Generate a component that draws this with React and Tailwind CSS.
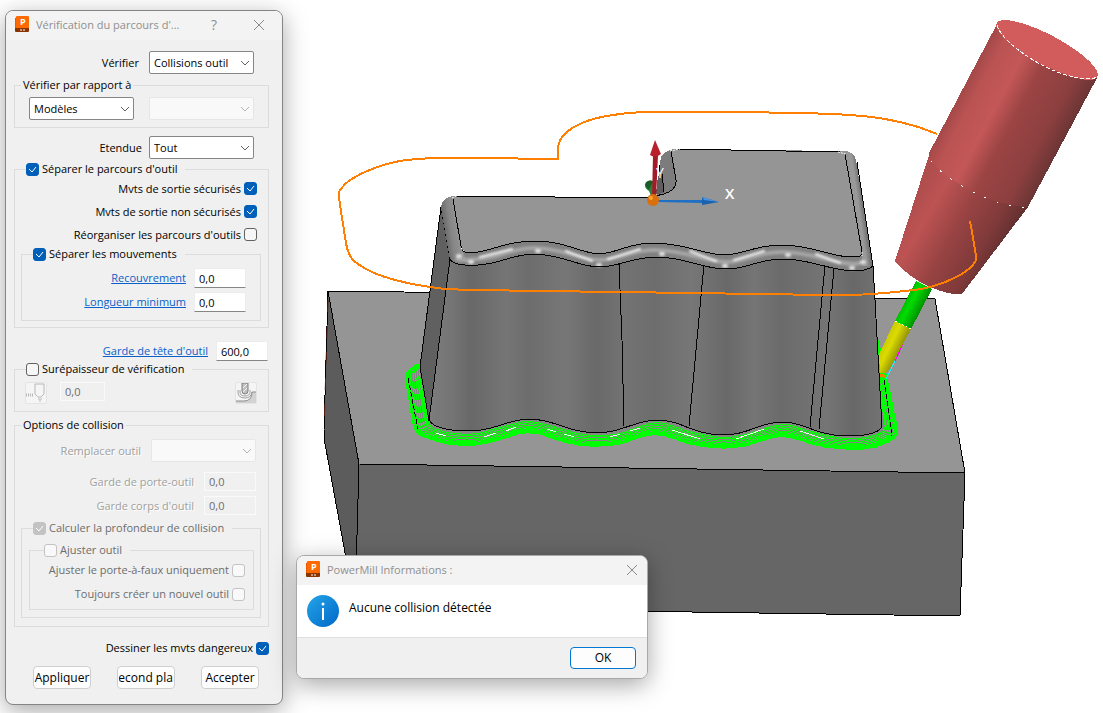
import React from "react";
import clsx from "clsx";

// The tool path follows the foot of the part; every pass is a blend of these two outlines.
const INNER = [
  [421, 364], [421, 374], [425, 400], [429, 421], [438, 428], [455, 432], [476, 432],
  [502, 425], [529, 420], [557, 426], [578, 432], [597, 434], [620, 432], [657, 421],
  [690, 430], [722, 436], [745, 433], [783, 423], [815, 431], [845, 437], [865, 436],
  [883, 428], [882, 400], [879, 375], [877, 335],
];
const OUTER = [
  [417, 364], [406, 375], [409, 400], [415, 430], [427, 438], [448, 444], [476, 445],
  [502, 439], [530, 432], [557, 440], [578, 445], [597, 446], [620, 444], [655, 434],
  [690, 444], [722, 448], [745, 446], [783, 436], [815, 445], [845, 449], [870, 448],
  [896, 436], [893, 408], [887, 378], [878, 340],
];
const PASSES = [0.12, 0.24, 0.37, 0.5, 0.62, 0.72, 0.81, 0.89, 0.96, 1];

function smoothPath(points) {
  return points.reduce((d, p, i) => {
    if (i === 0) {
      return `M${p[0]} ${p[1]}`;
    }
    const a = points[i - 1];
    const before = points[i - 2] || a;
    const after = points[i + 1] || p;
    const c1 = [a[0] + (p[0] - before[0]) / 6, a[1] + (p[1] - before[1]) / 6];
    const c2 = [p[0] - (after[0] - a[0]) / 6, p[1] - (after[1] - a[1]) / 6];
    return `${d}C${c1.join(" ")} ${c2.join(" ")} ${p.join(" ")}`;
  }, "");
}

function blend(t) {
  return INNER.map(([x, y], i) => [
    x + (OUTER[i][0] - x) * t,
    y + (OUTER[i][1] - y) * t,
  ]);
}

const TOP_EDGE =
  "C462 251 464 253 471 253C490 252 505 241 535 241C565 241 580 253 599 254C618 253 628 243 653 243C685 243 705 255 725 255C745 254 755 245 782 245C812 245 830 257 852 257C858 257 862 257 862 252";
const LOWER_EDGE =
  "M450 259C452 264 460 266 478 265C500 264 510 255 533 254C562 254 578 267 600 267C622 266 632 257 657 257C685 257 702 269 726 269C748 269 758 259 783 259C812 259 830 271 855 271C862 271 870 269 873 266";

const ORANGE_LOOP = smoothPath([
  [937, 134], [915, 126], [885, 119], [850, 115], [800, 113], [727, 112], [650, 112],
  [620, 114], [590, 120], [568, 131], [559, 143], [558, 159],
]);
const ORANGE_LOOP_LEFT = smoothPath([
  [559, 159], [470, 158], [435, 158], [400, 161], [372, 169], [350, 180], [341, 189],
  [339, 196], [343, 224], [348, 251], [358, 264], [385, 277], [430, 287], [475, 290],
  [620, 292], [760, 294], [850, 295], [895, 292], [930, 287], [960, 275], [975, 262],
  [975, 250], [970, 221],
]);

const GLINTS =
  "M480 257L512 249M566 251L592 261M608 259L640 249M690 251L716 261M734 260L764 251M816 254L840 263";
const SPOTS = [
  [459, 256], [471, 262], [538, 251], [599, 265], [662, 254], [725, 266], [788, 255],
  [852, 268], [863, 262],
];

function Scene() {
  return (
    <svg
      className="block w-full h-auto"
      viewBox="0 0 1103 713"
      role="img"
      aria-label="Vue 3D de la pièce et de l'outil"
    >
      <defs>
        <linearGradient id="wall" gradientUnits="userSpaceOnUse" x1="430" y1="0" x2="880" y2="0">
          <stop offset="0" stopColor="#7c7c7c" />
          <stop offset="0.05" stopColor="#747474" />
          <stop offset="0.09" stopColor="#686868" />
          <stop offset="0.17" stopColor="#757575" />
          <stop offset="0.22" stopColor="#6d6d6d" />
          <stop offset="0.3" stopColor="#777777" />
          <stop offset="0.37" stopColor="#696969" />
          <stop offset="0.43" stopColor="#737373" />
          <stop offset="0.5" stopColor="#6d6d6d" />
          <stop offset="0.58" stopColor="#777777" />
          <stop offset="0.66" stopColor="#696969" />
          <stop offset="0.72" stopColor="#757575" />
          <stop offset="0.78" stopColor="#6b6b6b" />
          <stop offset="0.88" stopColor="#757575" />
          <stop offset="0.94" stopColor="#686868" />
          <stop offset="1" stopColor="#727272" />
        </linearGradient>
        <linearGradient id="holder" gradientUnits="userSpaceOnUse" x1="963" y1="90" x2="1062" y2="143">
          <stop offset="0" stopColor="#a54949" />
          <stop offset="0.12" stopColor="#bb5353" />
          <stop offset="0.33" stopColor="#c45757" />
          <stop offset="0.52" stopColor="#9c4444" />
          <stop offset="0.82" stopColor="#8c3f3f" />
          <stop offset="1" stopColor="#6c3535" />
        </linearGradient>
        <linearGradient id="cone" gradientUnits="userSpaceOnUse" x1="910" y1="204" x2="1000" y2="256">
          <stop offset="0" stopColor="#b04d4d" />
          <stop offset="0.2" stopColor="#bd5353" />
          <stop offset="0.5" stopColor="#994343" />
          <stop offset="0.8" stopColor="#803a3a" />
          <stop offset="1" stopColor="#602f2f" />
        </linearGradient>
        <linearGradient id="shank" gradientUnits="userSpaceOnUse" x1="903" y1="300" x2="922" y2="310">
          <stop offset="0" stopColor="#00b400" />
          <stop offset="0.4" stopColor="#00dc00" />
          <stop offset="1" stopColor="#008c00" />
        </linearGradient>
        <linearGradient id="tip" gradientUnits="userSpaceOnUse" x1="883" y1="342" x2="901" y2="351">
          <stop offset="0" stopColor="#c8c800" />
          <stop offset="0.4" stopColor="#dcdc00" />
          <stop offset="1" stopColor="#8c8c00" />
        </linearGradient>
        <linearGradient id="leftRound" gradientUnits="userSpaceOnUse" x1="443" y1="226" x2="457" y2="224">
          <stop offset="0" stopColor="#666666" />
          <stop offset="0.5" stopColor="#858585" />
          <stop offset="1" stopColor="#929292" />
        </linearGradient>
        <linearGradient id="rightRound" gradientUnits="userSpaceOnUse" x1="852" y1="212" x2="866" y2="210">
          <stop offset="0" stopColor="#949494" />
          <stop offset="0.5" stopColor="#9a9a9a" />
          <stop offset="1" stopColor="#606060" />
        </linearGradient>
        <filter id="soft" x="-5%" y="-50%" width="110%" height="200%">
          <feGaussianBlur stdDeviation="1" />
        </filter>
      </defs>

      {/* stock block */}
      <g stroke="#000" strokeWidth="1" shapeRendering="crispEdges" strokeLinejoin="round">
        <path d="M328 291L935 299L965 473L359 464Z" fill="#959595" />
        <path d="M328 291L359 464L355 607L324 438L324 430Z" fill="#5c5c5c" />
        <path d="M359 464L965 473L960 616L355 607Z" fill="#666666" />
      </g>
      <path d="M328 300L324 430" fill="none" stroke="#5a1e10" strokeDasharray="12 14" />

      {/* fillet at the foot of the part, with the passes on it */}
      <path
        d={`${smoothPath(blend(1))}L876 335L421 364Z`}
        fill="#858585"
        shapeRendering="crispEdges"
      />
      <g fill="none" stroke="#00ff00" shapeRendering="crispEdges">
        {PASSES.map((t) => (
          <path key={t} d={smoothPath(blend(t))} strokeWidth="1" />
        ))}
        <path d="M417 378L427 425M419 376L429 424M878 375L886 428" strokeWidth="2" />
        <path
          d="M452 442Q476 446 500 439M512 434Q530 429 550 436M574 443Q597 448 622 442M640 436Q657 431 672 437M700 445Q725 449 748 444M766 438Q783 433 800 439M824 446Q850 450 878 446"
          strokeWidth="3"
        />
      </g>
      <g fill="none" stroke="#e8ffe8" shapeRendering="crispEdges">
        <path d="M436 433L446 436M484 437L496 433M506 431L516 427M547 429L556 432M564 434L574 437M610 437L620 434M630 431L640 428M672 430L700 439M736 439L764 429M800 431L824 439" />
      </g>
      <path
        d="M408 378L418 429M884 380L892 436"
        fill="none"
        stroke="#000"
        strokeDasharray="5 2"
        shapeRendering="crispEdges"
      />

      {/* part: dark side, wall, top */}
      <g shapeRendering="crispEdges">
        <path d="M441 207L450 259L429 421L420 367Z" fill="#606060" stroke="#000" />
        <path
          d={`${LOWER_EDGE}L875 300L882 427C878 433 868 436 848 436C815 436 805 422 783 422C758 422 750 435 722 435C690 434 682 420 657 420C632 421 622 433 597 433C565 432 555 419 529 419C505 420 495 431 470 431C445 431 433 427 429 420Z`}
          fill="url(#wall)"
          stroke="#000"
        />
        <path
          d="M619 264L622 340L624 426M704 264L689 426M825 265L810 427M834 268L819 429"
          fill="none"
          stroke="#000"
        />
        <path
          d={`${LOWER_EDGE}L856 160Q854 151 844 151L676 149Q660 150 660 165L657 196L652 198L456 196Q442 196 441 208Z`}
          fill="#808080"
        />
        <path d="M441 208Q443 197 453 196L461 248L468 262L450 260Z" fill="url(#leftRound)" />
        <path d="M844 151Q854 151 856 160L873 266L862 266L862 254Z" fill="url(#rightRound)" />
        <path
          d={`M453 197L461 246${TOP_EDGE}L845 153L844 151L676 149L671 151L676 180Q677 192 655 196L652 198Z`}
          fill="#959595"
        />
        <path d="M671 151L676 180Q677 190 664 194L657 196L660 162Q661 151 671 151Z" fill="#7c7c7c" />
        <path d="M658 176L662 176L664 193L656 194Z" fill="#5e5e5e" />
      </g>
      <g filter="url(#soft)" fill="none">
        <path
          d="M456 258C460 262 470 259 478 259C500 258 510 248 535 248C562 248 580 260 600 260C620 260 630 250 655 250C685 250 705 262 726 262C746 262 756 252 783 252C812 252 832 264 855 264L866 262"
          stroke="#a6a6a6"
          strokeWidth="4"
        />
        <path d={GLINTS} stroke="#f4f4f4" strokeWidth="2" strokeLinecap="round" />
        {SPOTS.map(([x, y]) => (
          <ellipse key={x} cx={x} cy={y} rx="3" ry="2" fill="#e0e0e0" />
        ))}
      </g>
      <g fill="none" stroke="#000" shapeRendering="crispEdges">
        <path d={`M453 199L461 246${TOP_EDGE}L845 154`} />
        <path d={LOWER_EDGE} />
        <path d="M456 196L652 198M676 149L840 152M857 162L873 266M671 151L676 180Q677 190 664 194L655 196M659 165V176M662 174L664 192" />
      </g>
      <path
        d="M452 198L456 196M461 248L464 251M670 151L680 149M838 152L846 154M862 252V256"
        stroke="#fff"
        strokeDasharray="2 1"
      />

      {/* workplane axes */}
      <g>
        <path d="M646 182Q653 178 654 184L655 198L651 196L649 191Q643 188 646 182Z" fill="#2c8038" />
        <path d="M645 185Q647 179 653 181L649 190Z" fill="#1d5a28" />
        <path d="M653 155H658L656 199H652Z" fill="#a21c28" />
        <path d="M655 140L661 154Q655 159 650 155Z" fill="#b8202c" />
        <path d="M658 200L703 200V203L658 202Z" fill="#1f6fc4" />
        <path d="M702 197L719 202L702 205Z" fill="#1b62ae" />
        <path d="M702 197L719 202L704 200Z" fill="#4a94e0" />
        <circle cx="653" cy="200" r="6" fill="#d87010" />
        <circle cx="651" cy="198" r="2" fill="#ffa030" />
        <text x="656" y="178" className="fill-white font-['Open_Sans',sans-serif] text-[14px]">Y</text>
        <text x="725" y="199" className="fill-white font-['Open_Sans',sans-serif] text-[15px] font-semibold">X</text>
      </g>

      {/* tool and holder */}
      <g shapeRendering="crispEdges">
        <path d="M903 344L895 361" stroke="#ff00ff" />
        <path d="M895 361L886 379" stroke="#00ffff" />
        <path d="M916 281L932 289L911 329L895 321Z" fill="url(#shank)" />
        <path d="M895 321L911 329L890 368Q887 374 880 373L879 354Z" fill="url(#tip)" />
        <path d="M895 321L911 329" stroke="#f4ffd8" strokeDasharray="2 2" />
        <path d="M880 375L886 377" stroke="#ff7a00" strokeWidth="3" />
        <path
          d="M929 155L895 261Q908 277 930 287Q952 296 962 294L1028 207L1020 190Z"
          fill="url(#cone)"
        />
        <path
          d="M997 24L929 153Q930 164 946 175Q990 206 1028 207L1097 78Z"
          fill="url(#holder)"
        />
        <path
          d="M931 161Q938 170 948 177Q990 206 1028 208"
          fill="none"
          stroke="#fff"
          strokeDasharray="2 11"
        />
        <ellipse cx="1047" cy="50" rx="57" ry="15" transform="rotate(28 1047 50)" fill="#d25c5c" />
        <path
          d="M997 25C1000 37 1022 56 1050 69C1070 78 1090 81 1097 77"
          fill="none"
          stroke="#fff"
          strokeDasharray="4 2"
        />
      </g>

      <g fill="none" stroke="#ff8000" strokeWidth="2" shapeRendering="crispEdges">
        <path d={ORANGE_LOOP} />
        <path d={ORANGE_LOOP_LEFT} />
      </g>
    </svg>
  );
}

function AppIcon() {
  return (
    <svg width="15" height="17" viewBox="0 0 15 17" aria-hidden="true">
      <path d="M0 2L3 1V12L0 15Z" fill="#e85a00" />
      <rect x="1" y="0" width="13" height="13" rx="1" fill="#ff6a00" />
      <path d="M0 12H14V15Q14 16 13 16H1Q0 16 0 15Z" fill="#8a3400" />
      <text x="5" y="9" fill="#fff" className="font-['Open_Sans',sans-serif] text-[9px] font-bold">P</text>
      <path d="M5 14H10" stroke="#fff" strokeWidth="1" strokeDasharray="2 1" />
    </svg>
  );
}

function CloseButton() {
  return (
    <button type="button" aria-label="Fermer" className="flex h-6 w-6 items-center justify-center">
      <svg width="12" height="12" viewBox="0 0 12 12" aria-hidden="true">
        <path d="M1 1L11 11M11 1L1 11" stroke="#8a8a8a" fill="none" />
      </svg>
    </button>
  );
}

function Select({ id, label, value, disabled }) {
  return (
    <span className="relative inline-flex">
      <select
        id={id}
        aria-label={label}
        disabled={disabled}
        defaultValue={value}
        className={clsx(
          "h-[23px] w-[105px] appearance-none rounded-xs border pl-1 pr-4 text-[11px]",
          disabled ? "border-[#e6e6e6] bg-[#f9f9f9]" : "border-[#868686] bg-white text-black"
        )}
      >
        <option>{value}</option>
      </select>
      <svg
        className="pointer-events-none absolute right-1 top-2"
        width="10"
        height="8"
        viewBox="0 0 10 8"
        aria-hidden="true"
      >
        <path d="M1 2L5 6L9 2" fill="none" stroke={disabled ? "#b4b4b4" : "#606060"} />
      </svg>
    </span>
  );
}

function NumberBox({ id, label, value, disabled, narrow }) {
  return (
    <input
      id={id}
      aria-label={label}
      type="text"
      defaultValue={value}
      disabled={disabled}
      className={clsx(
        "border px-1 text-[11px]",
        narrow ? "w-[45px]" : "w-[52px]",
        disabled
          ? "h-[19px] border-[#fafafa] bg-[#f0f0f0] text-[#6d6d6d]"
          : "h-5 border-[#ececec] border-b-[#868686] bg-white text-black"
      )}
    />
  );
}

function Checkbox({ id, checked, disabled }) {
  return (
    <span className="relative inline-flex">
      <input
        id={id}
        type="checkbox"
        defaultChecked={checked}
        disabled={disabled}
        className={clsx(
          "peer h-[13px] w-[13px] appearance-none rounded-[3px] border",
          disabled
            ? "border-[#c3c3c3] bg-[#f9f9f9] checked:bg-[#c3c3c3]"
            : "border-[#626262] bg-[#f6f6f6] checked:border-[#005fb8] checked:bg-[#005fb8]"
        )}
      />
      <svg
        className="pointer-events-none absolute inset-0 hidden peer-checked:block"
        width="13"
        height="13"
        viewBox="0 0 13 13"
        aria-hidden="true"
      >
        <path d="M3 6L6 9L10 4" fill="none" stroke="#fff" />
      </svg>
    </span>
  );
}

function Group({ legend, className, children }) {
  return (
    <fieldset className={clsx("border border-[#dcdcdc]", className)}>
      {legend}
      {children}
    </fieldset>
  );
}

function CheckLegend({ id, checked, disabled, className, children }) {
  return (
    <legend className={clsx("h-4", className)}>
      <span className="flex h-4 items-center gap-[3px]">
        <Checkbox id={id} checked={checked} disabled={disabled} />
        <label htmlFor={id} className={disabled ? "text-[#6d6d6d]" : ""}>
          {children}
        </label>
      </span>
    </legend>
  );
}

function CheckRow({ id, checked, disabled, className, children }) {
  return (
    <div className={clsx("flex items-center justify-end gap-[3px]", className)}>
      <label htmlFor={id} className={disabled ? "text-[#6d6d6d]" : ""}>
        {children}
      </label>
      <Checkbox id={id} checked={checked} disabled={disabled} />
    </div>
  );
}

function LinkRow({ id, label, value, className }) {
  return (
    <div className={clsx("flex items-center justify-end gap-2", className)}>
      <a href="#" className="text-[#0a60c8] underline">
        {label}
      </a>
      <NumberBox id={id} label={label} value={value} />
    </div>
  );
}

const FADED = "text-[#a0a0a0] [text-shadow:1px_1px_0_#ffffff]";
const PUSH_BUTTON =
  "flex h-[23px] w-[58px] items-center justify-center overflow-hidden whitespace-nowrap rounded border border-[#cfcfcf] bg-[#fdfdfd] text-xs";
const TOOL_BUTTON =
  "flex h-[22px] w-[22px] items-center justify-center rounded-xs border border-[#e4e4e4] bg-[#f5f5f5]";

function CheckDialog() {
  return (
    <section
      aria-label="Vérification du parcours d'outil"
      className="absolute left-[5px] top-[10px] w-[278px] overflow-hidden rounded-lg border border-[#858585] bg-[#f0f0f0] shadow-[0_6px_24px_rgba(0,0,0,0.35)]"
    >
      <header className="flex h-[29px] items-center bg-[#f3f3f3] pb-[2px] pl-[9px] pr-[11px] text-[#8f8f8f]">
        <AppIcon />
        <h1 className="ml-[6px] flex-1 whitespace-nowrap">Vérification du parcours d'...</h1>
        <button type="button" aria-label="Aide" className="mr-[23px] w-5 text-sm">
          ?
        </button>
        <CloseButton />
      </header>

      <form className="pb-[15px] pl-2 pr-[13px] pt-[11px]" onSubmit={(e) => e.preventDefault()}>
        <div className="flex items-center justify-end gap-[10px] pr-[15px]">
          <label htmlFor="verifier">Vérifier</label>
          <Select id="verifier" value="Collisions outil" />
        </div>

        <Group
          className="mt-[3px] pb-[7px] pl-[14px] pr-[14px]"
          legend={<legend className="-ml-2 h-4 px-[2px] leading-4">Vérifier par rapport à</legend>}
        >
          <div className="flex justify-between pt-1">
            <Select label="Type de référence" value="Modèles" />
            <Select label="Référence" value="" disabled />
          </div>
        </Group>

        <div className="mt-2 flex items-center justify-end gap-[7px] pr-[15px]">
          <label htmlFor="etendue">Etendue</label>
          <Select id="etendue" value="Tout" />
        </div>

        <Group
          className="mt-[2px] pb-[6px] pl-[6px] pr-[7px]"
          legend={
            <CheckLegend id="separer" checked className="ml-[5px] pr-2">
              Séparer le parcours d'outil
            </CheckLegend>
          }
        >
          <CheckRow id="securises" checked className="h-[23px] pr-1">
            Mvts de sortie sécurisés
          </CheckRow>
          <CheckRow id="nonsecurises" checked className="h-[23px] pr-1">
            Mvts de sortie non sécurisés
          </CheckRow>
          <CheckRow id="reorganiser" className="h-[23px] pr-1">
            Réorganiser les parcours d'outils
          </CheckRow>
          <Group
            className="pb-2 pr-[14px]"
            legend={
              <CheckLegend id="mouvements" checked className="ml-[11px] pr-2">
                Séparer les mouvements
              </CheckLegend>
            }
          >
            <LinkRow id="recouvrement" label="Recouvrement" value="0,0" className="pt-[6px]" />
            <LinkRow id="longueur" label="Longueur minimum" value="0,0" className="pt-1" />
          </Group>
        </Group>

        <LinkRow id="tete" label="Garde de tête d'outil" value="600,0" className="mt-[13px] pr-px" />

        <Group
          className="pb-[7px] pl-[10px] pr-[11px]"
          legend={
            <CheckLegend id="surepaisseur" className="ml-[1px] pr-2">
              Surépaisseur de vérification
            </CheckLegend>
          }
        >
          <div className="flex items-start pt-[5px]">
            <button type="button" disabled aria-label="Surépaisseur radiale" className={TOOL_BUTTON}>
              <svg width="20" height="20" viewBox="0 0 20 20" fill="none" aria-hidden="true">
                <path d="M9 1H18V11L15 14H12L9 11Z" stroke="#b8b8b8" />
                <path d="M12 16H16M13 18H15" stroke="#b8b8b8" />
                <path d="M0 12H8" stroke="#b8b8b8" strokeWidth="3" strokeDasharray="1 1" />
              </svg>
            </button>
            <span className="ml-[13px] mr-auto">
              <NumberBox label="Surépaisseur" value="0,0" disabled narrow />
            </span>
            <button type="button" disabled aria-label="Surépaisseur composants" className={TOOL_BUTTON}>
              <svg width="20" height="20" viewBox="0 0 20 20" fill="none" aria-hidden="true">
                <path d="M0 18H9Q16 18 16 9H20V20H0Z" fill="#d2d2d2" />
                <path d="M0 18H8Q16 18 16 9H20" stroke="#8c8c8c" />
                <path d="M6 0H12V8Q12 11 9 11Q6 11 6 8Z" fill="#c0c0c0" stroke="#808080" />
                <path d="M7 5L11 1M7 9L11 5" stroke="#f0f0f0" />
                <path d="M4 7V9Q4 13 9 13Q14 13 14 9V7M2 7V9Q2 15 9 15Q15 15 16 9" stroke="#a0a0a0" />
              </svg>
            </button>
          </div>
        </Group>

        <Group
          className="mt-[5px] pb-2 pl-[6px] pr-[7px]"
          legend={<legend className="h-4 px-[2px] leading-4">Options de collision</legend>}
        >
          <div className="flex items-center justify-end gap-[10px] pr-[5px] pt-[6px]">
            <label htmlFor="remplacer" className={FADED}>
              Remplacer outil
            </label>
            <Select id="remplacer" value="" disabled />
          </div>
          <div className="mt-[10px] flex items-center justify-end gap-[10px] pr-[5px]">
            <label htmlFor="porte" className={FADED}>
              Garde de porte-outil
            </label>
            <NumberBox id="porte" value="0,0" disabled />
          </div>
          <div className="mt-[5px] flex items-center justify-end gap-[10px] pr-[5px]">
            <label htmlFor="corps" className={FADED}>
              Garde corps d'outil
            </label>
            <NumberBox id="corps" value="0,0" disabled />
          </div>
          <Group
            className="mt-[5px] pb-[7px] pl-[7px] pr-[6px]"
            legend={
              <CheckLegend id="profondeur" checked disabled className="ml-1 pr-2">
                Calculer la profondeur de collision
              </CheckLegend>
            }
          >
            <Group
              className="mt-[6px] pb-[3px] pr-2"
              legend={
                <CheckLegend id="ajuster" disabled className="ml-[14px] pr-2">
                  Ajuster outil
                </CheckLegend>
              }
            >
              <CheckRow id="portefaux" disabled className="h-6">
                Ajuster le porte-à-faux uniquement
              </CheckRow>
              <CheckRow id="nouvel" disabled className="h-6">
                Toujours créer un nouvel outil
              </CheckRow>
            </Group>
          </Group>
        </Group>

        <CheckRow id="dessiner" checked className="mt-[11px] h-5">
          Dessiner les mvts dangereux
        </CheckRow>

        <div className="mt-2 flex justify-between pl-[19px] pr-[10px]">
          <button type="submit" className={PUSH_BUTTON}>
            Appliquer
          </button>
          <button type="button" className={PUSH_BUTTON}>
            <span className="flex w-[54px] shrink-0 justify-center overflow-hidden">
              <span className="shrink-0">Second plan</span>
            </span>
          </button>
          <button type="button" className={PUSH_BUTTON}>
            Accepter
          </button>
        </div>
      </form>
    </section>
  );
}

function MessageDialog() {
  return (
    <section
      aria-label="PowerMill Informations"
      className="absolute left-[296px] top-[555px] w-[352px] overflow-hidden rounded-lg border border-[#a8a8a8] bg-white shadow-[0_6px_24px_rgba(0,0,0,0.35)]"
    >
      <header className="flex h-[29px] items-center bg-[#f3f3f3] pb-[2px] pl-[9px] pr-[3px] text-[#8f8f8f]">
        <AppIcon />
        <h2 className="ml-[6px] flex-1">PowerMill Informations :</h2>
        <CloseButton />
      </header>
      <div className="flex items-start gap-[10px] px-[10px] pb-[10px] pt-[10px]">
        <svg width="32" height="32" viewBox="0 0 32 32" aria-hidden="true">
          <defs>
            <linearGradient id="info" x1="0" y1="0" x2="1" y2="1">
              <stop offset="0" stopColor="#25a5e8" />
              <stop offset="1" stopColor="#0068c8" />
            </linearGradient>
          </defs>
          <circle cx="16" cy="16" r="16" fill="url(#info)" />
          <rect x="15" y="13" width="2" height="12" fill="#fff" />
          <circle cx="16" cy="9" r="1.5" fill="#fff" />
        </svg>
        <p className="pt-[5px] text-xs">Aucune collision détectée</p>
      </div>
      <footer className="flex justify-end border-t border-[#dfdfdf] bg-[#f0f0f0] pb-[9px] pr-[11px] pt-[9px]">
        <button
          type="button"
          className="h-[22px] w-[66px] rounded border border-[#0078d4] bg-[#fdfdfd] text-xs"
        >
          OK
        </button>
      </footer>
    </section>
  );
}

export default function App() {
  return (
    <main className="relative min-h-screen overflow-hidden bg-white font-['Open_Sans',sans-serif] text-[11px] leading-4 text-black">
      <Scene />
      <CheckDialog />
      <MessageDialog />
    </main>
  );
}
